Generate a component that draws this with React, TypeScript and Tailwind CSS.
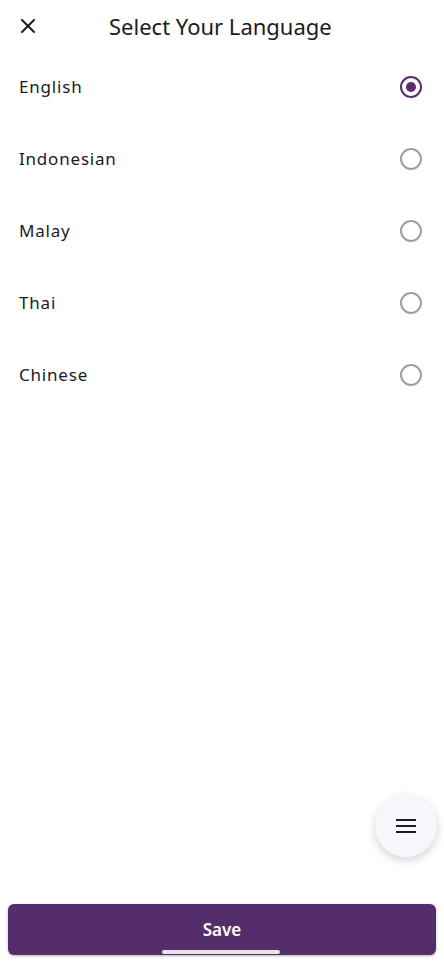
import { X } from 'lucide-react'
import { useState } from 'react'

const languages = ['English', 'Indonesian', 'Malay', 'Thai', 'Chinese']

export default function App() {
  const [selected, setSelected] = useState('English')

  return (
    <div className="relative flex flex-col h-[961px] bg-white text-[#1c1b1f]" style={{ fontFamily: '"Noto Sans", "Open Sans", sans-serif' }}>
      <header className="flex items-center h-[51px] px-[16px]">
        <X size={24} strokeWidth={2} className="text-[#1c1b1f]" />
        <h1 className="ml-[69px] text-[22px] leading-none text-[#1c1b1f]">Select Your Language</h1>
      </header>

      <ul>
        {languages.map(l => (
          <li key={l} onClick={() => setSelected(l)} className="flex items-center justify-between h-[72px] pl-[19px] pr-[22px]">
            <span className="text-[17px] tracking-[0.8px] text-[#1c1b1f]">{l}</span>
            {selected === l ? (
              <span className="flex items-center justify-center w-[22px] h-[22px] rounded-full border-2 border-[#5b2c73]">
                <span className="w-[10px] h-[10px] rounded-full bg-[#5b2c73]" />
              </span>
            ) : (
              <span className="w-[22px] h-[22px] rounded-full border-2 border-[#9e9e9e]" />
            )}
          </li>
        ))}
      </ul>

      <div className="flex-1" />

      <button className="absolute left-[375px] top-[795px] w-[62px] h-[62px] rounded-full bg-[#f8f6fd] shadow-[0_3px_10px_rgba(0,0,0,0.18)] flex items-center justify-center">
        <svg width="20" height="14" viewBox="0 0 20 14" fill="#1c1b1f">
          <rect x="0" y="0" width="20" height="2" />
          <rect x="0" y="6" width="20" height="2" />
          <rect x="0" y="12" width="20" height="2" />
        </svg>
      </button>

      <div className="px-[8px] pb-[6px]">
        <button className="relative w-full h-[51px] rounded-[6px] bg-[#562d6b] text-white text-[17px] font-semibold shadow-[0_1px_3px_rgba(0,0,0,0.3)]">
          Save
          <span className="absolute left-[154px] bottom-[1px] w-[118px] h-[4px] rounded-full bg-[#e8e4ec]" />
        </button>
      </div>
    </div>
  )
}
